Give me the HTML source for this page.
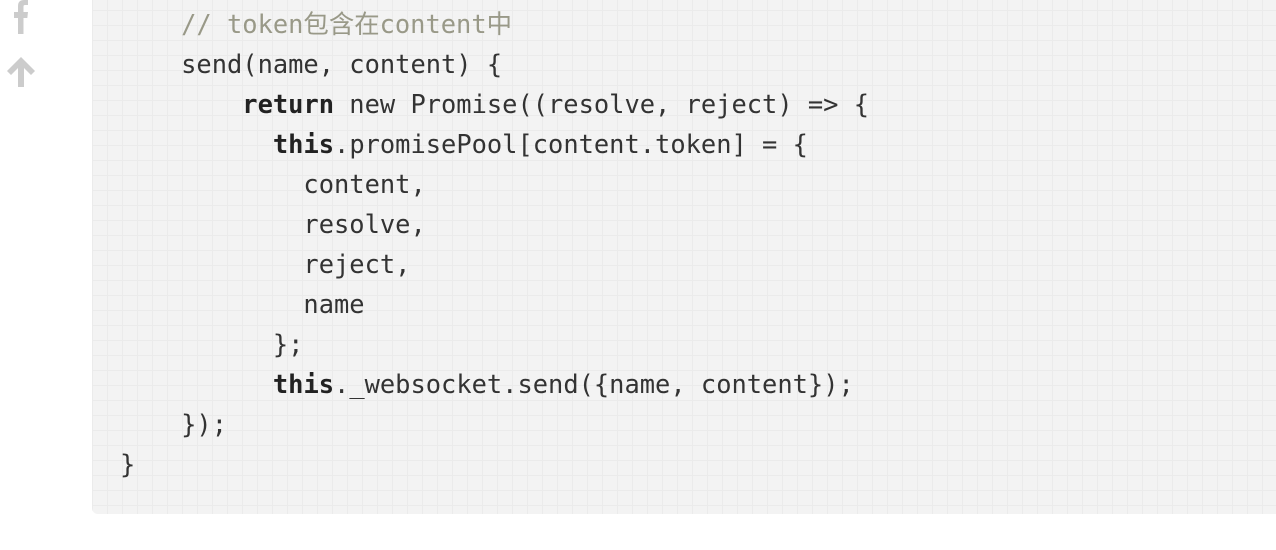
<!DOCTYPE html>
<html><head><meta charset="utf-8"><style>
html,body{margin:0;padding:0;background:#fff;width:1276px;height:550px;overflow:hidden;position:relative}
.panel{position:absolute;left:92px;top:-20px;width:1200px;height:534px;border-radius:6px;
background-color:#f3f3f3;
background-image:linear-gradient(#ebebeb 1px,transparent 1px),linear-gradient(90deg,#ebebeb 1px,transparent 1px);
background-size:15px 15px;background-position:0 0}
pre{position:absolute;left:120px;top:4px;margin:0;font-family:"DejaVu Sans Mono","Liberation Mono","Noto Sans CJK SC",monospace;font-size:25.4px;line-height:40px;color:#333}
.c{color:#999988}
b{font-weight:bold;color:#222}
</style></head><body>
<div class="panel"></div>
<svg style="position:absolute;left:10px;top:0" width="22" height="34" viewBox="0 0 22 34"><path d="M8 34V18H4v-6h4V6c0-4 2-6 6-6h4v5h-3c-1 0-1.5.5-1.5 1.5V12h4.5l-.7 6H13.5v16z" fill="#ccc"/></svg>
<svg style="position:absolute;left:5px;top:56px" width="32" height="32" viewBox="0 0 32 32"><path d="M16 1L2 15l4 4 7-7v19h6V12l7 7 4-4z" fill="#ccc"/></svg>
<pre><span class="c">    // token包含在content中</span>
    send(name, content) {
        <b>return</b> new Promise((resolve, reject) => {
          <b>this</b>.promisePool[content.token] = {
            content,
            resolve,
            reject,
            name
          };
          <b>this</b>._websocket.send({name, content});
    });
}</pre>
</body></html>
